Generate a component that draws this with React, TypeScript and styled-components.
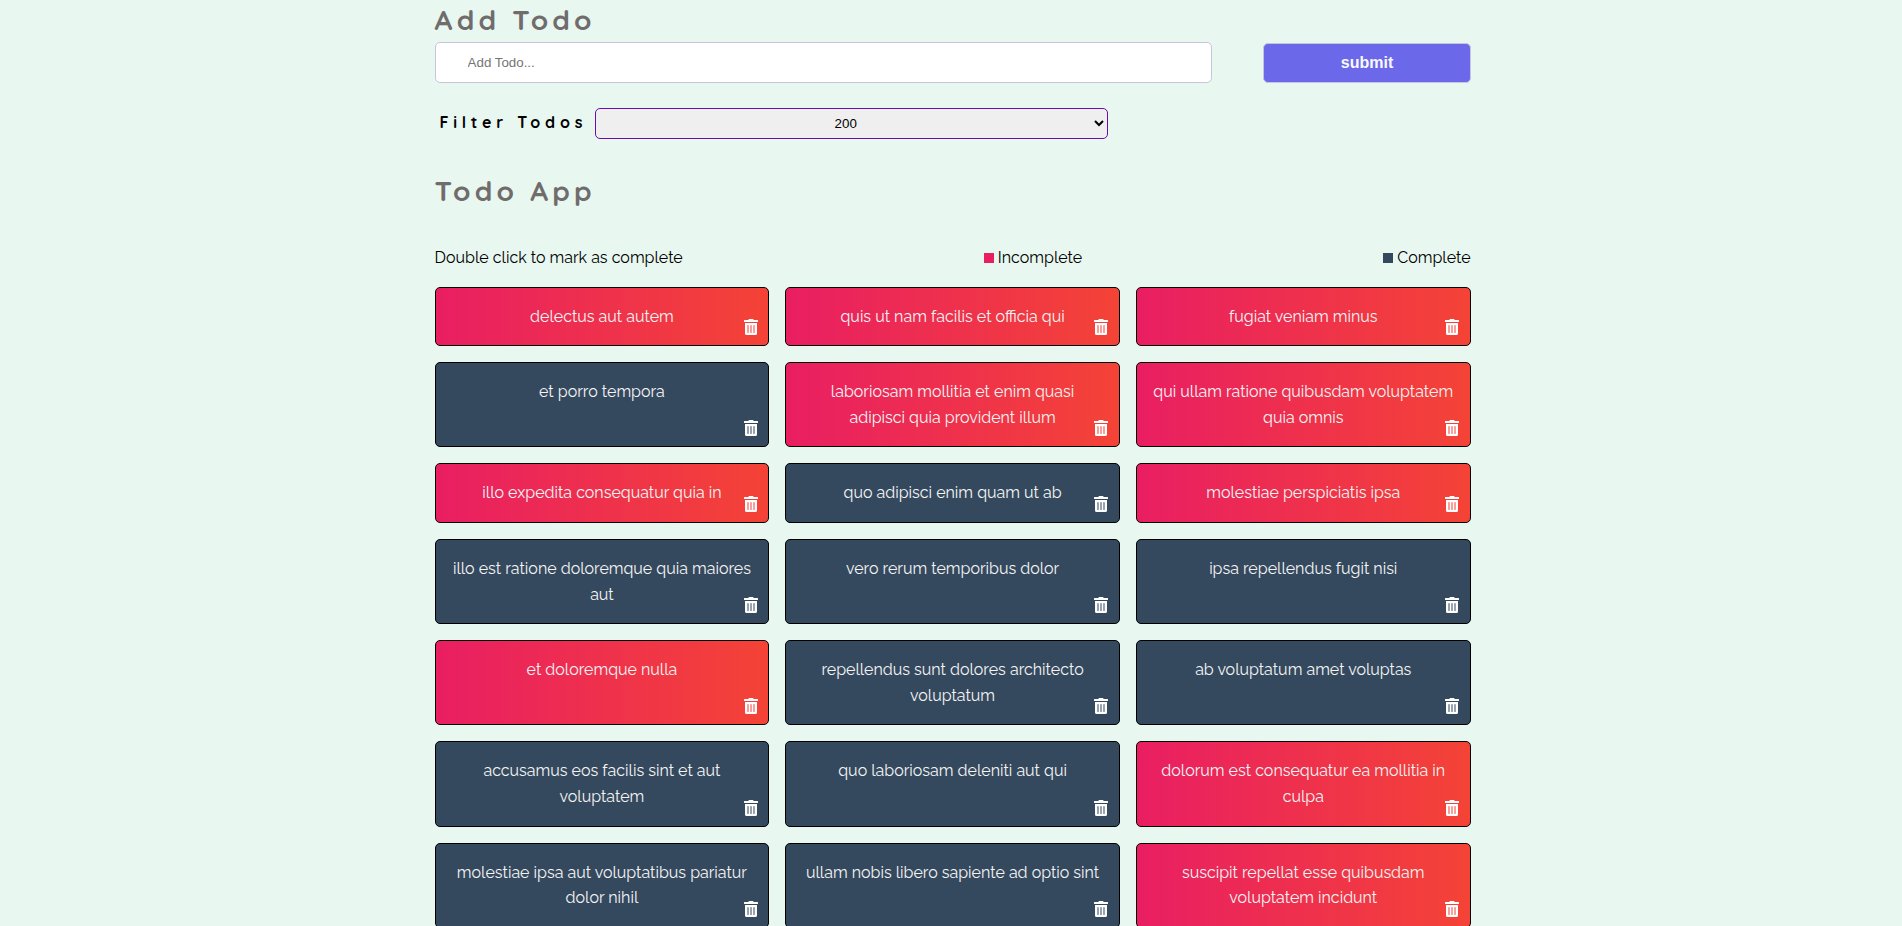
import React, { useState } from 'react';
import styled, { createGlobalStyle } from 'styled-components';
import { FaTrashAlt } from 'react-icons/fa';

const GlobalStyle = createGlobalStyle`
  *, *::before, *::after { box-sizing: border-box; margin: 0; padding: 0; }
  html, body { height: 100%; overflow: hidden; }
  body {
    font-family: Raleway, Lato, sans-serif;
    font-size: 16px;
    line-height: 1.6;
    color: #000;
    background: #e8f7f0;
  }
`;

const Container = styled.main`
  width: 1036px;
  margin: 0 0 0 434.6px;
`;

const Heading = styled.h1`
  font: 700 28px/40px Quicksand, Raleway, sans-serif;
  letter-spacing: 4.2px;
  color: #706c6c;
`;

const AddForm = styled.form`
  display: flex;
  justify-content: space-between;
  align-items: flex-end;
  height: 41px;
  margin-top: 2px;
`;

const TodoInput = styled.input`
  width: 777px;
  height: 41px;
  padding: 0 32px;
  border: 1px solid #c5c5de;
  border-radius: 5px;
  background: #fff;
  font: 13.333px "Liberation Sans", sans-serif;
`;

const SubmitButton = styled.button`
  width: 207.2px;
  height: 40px;
  border: 1px solid #c5c5de;
  border-radius: 5px;
  background: #6b69ea;
  color: #f8f8ff;
  font: bold 16px "Liberation Sans", sans-serif;
`;

const FilterRow = styled.div`
  display: flex;
  height: 31px;
  margin: 25px 0 32px;
  padding-left: 4.8px;
`;

const FilterLabel = styled.h4`
  width: 155.8px;
  font: 700 16px/28px Quicksand, Raleway, sans-serif;
  letter-spacing: 4.8px;
  white-space: nowrap;
`;

const FilterSelect = styled.select`
  width: 513px;
  height: 31px;
  border: 1px solid #6a0dad;
  border-radius: 5px;
  background: #efefef;
  color: #000;
  text-align: center;
  font: 13.333px "Liberation Sans", sans-serif;
`;

const Legend = styled.div`
  display: flex;
  justify-content: space-between;
  margin: 34px 0 16px;
`;

const Swatch = styled.span<{ $color: string }>`
  display: inline-block;
  width: 10px;
  height: 10px;
  background: ${(p) => p.$color};
`;

const TodoGrid = styled.div`
  display: grid;
  grid-template-columns: repeat(3, 1fr);
  gap: 16px;
`;

const TodoCard = styled.div<{ $done: boolean }>`
  position: relative;
  padding: 16px;
  border: 1px solid #000;
  border-radius: 5px;
  background: ${(p) => (p.$done ? '#34495e' : 'linear-gradient(to right, #e91e63, #f44336)')};
  color: #f4f4f4;
  text-align: center;
  cursor: pointer;
`;

const DeleteButton = styled.button`
  position: absolute;
  right: 10.5px;
  bottom: 10px;
  display: flex;
  border: none;
  background: none;
  color: #fff;
  font-size: 16px;
  cursor: pointer;

  svg { width: 14px; height: 16px; }
`;

interface Todo {
  title: string;
  done: boolean;
}

const initialTodos: Todo[] = [
  { title: 'delectus aut autem', done: false },
  { title: 'quis ut nam facilis et officia qui', done: false },
  { title: 'fugiat veniam minus', done: false },
  { title: 'et porro tempora', done: true },
  { title: 'laboriosam mollitia et enim quasi adipisci quia provident illum', done: false },
  { title: 'qui ullam ratione quibusdam voluptatem quia omnis', done: false },
  { title: 'illo expedita consequatur quia in', done: false },
  { title: 'quo adipisci enim quam ut ab', done: true },
  { title: 'molestiae perspiciatis ipsa', done: false },
  { title: 'illo est ratione doloremque quia maiores aut', done: true },
  { title: 'vero rerum temporibus dolor', done: true },
  { title: 'ipsa repellendus fugit nisi', done: true },
  { title: 'et doloremque nulla', done: false },
  { title: 'repellendus sunt dolores architecto voluptatum', done: true },
  { title: 'ab voluptatum amet voluptas', done: true },
  { title: 'accusamus eos facilis sint et aut voluptatem', done: true },
  { title: 'quo laboriosam deleniti aut qui', done: true },
  { title: 'dolorum est consequatur ea mollitia in culpa', done: false },
  { title: 'molestiae ipsa aut voluptatibus pariatur dolor nihil', done: true },
  { title: 'ullam nobis libero sapiente ad optio sint', done: true },
  { title: 'suscipit repellat esse quibusdam voluptatem incidunt', done: false },
];

export default function App() {
  const [todos, setTodos] = useState(initialTodos);

  const toggle = (title: string) =>
    setTodos(todos.map((t) => (t.title === title ? { ...t, done: !t.done } : t)));
  const remove = (title: string) => setTodos(todos.filter((t) => t.title !== title));

  return (
    <>
      <GlobalStyle />
      <Container>
        <Heading>Add Todo</Heading>
        <AddForm onSubmit={(e) => e.preventDefault()}>
          <TodoInput placeholder="Add Todo..." />
          <SubmitButton type="submit">submit</SubmitButton>
        </AddForm>
        <FilterRow>
          <FilterLabel>Filter Todos</FilterLabel>
          <FilterSelect defaultValue="200">
            <option value="200">200</option>
          </FilterSelect>
        </FilterRow>
        <Heading>Todo App</Heading>
        <Legend>
          <span>Double click to mark as complete</span>
          <span><Swatch $color="#e91e63" /> Incomplete</span>
          <span><Swatch $color="#34495e" /> Complete</span>
        </Legend>
        <TodoGrid>
          {todos.map((todo) => (
            <TodoCard key={todo.title} $done={todo.done} onDoubleClick={() => toggle(todo.title)}>
              {todo.title}
              <DeleteButton aria-label="Delete" onClick={() => remove(todo.title)}>
                <FaTrashAlt />
              </DeleteButton>
            </TodoCard>
          ))}
        </TodoGrid>
      </Container>
    </>
  );
}
